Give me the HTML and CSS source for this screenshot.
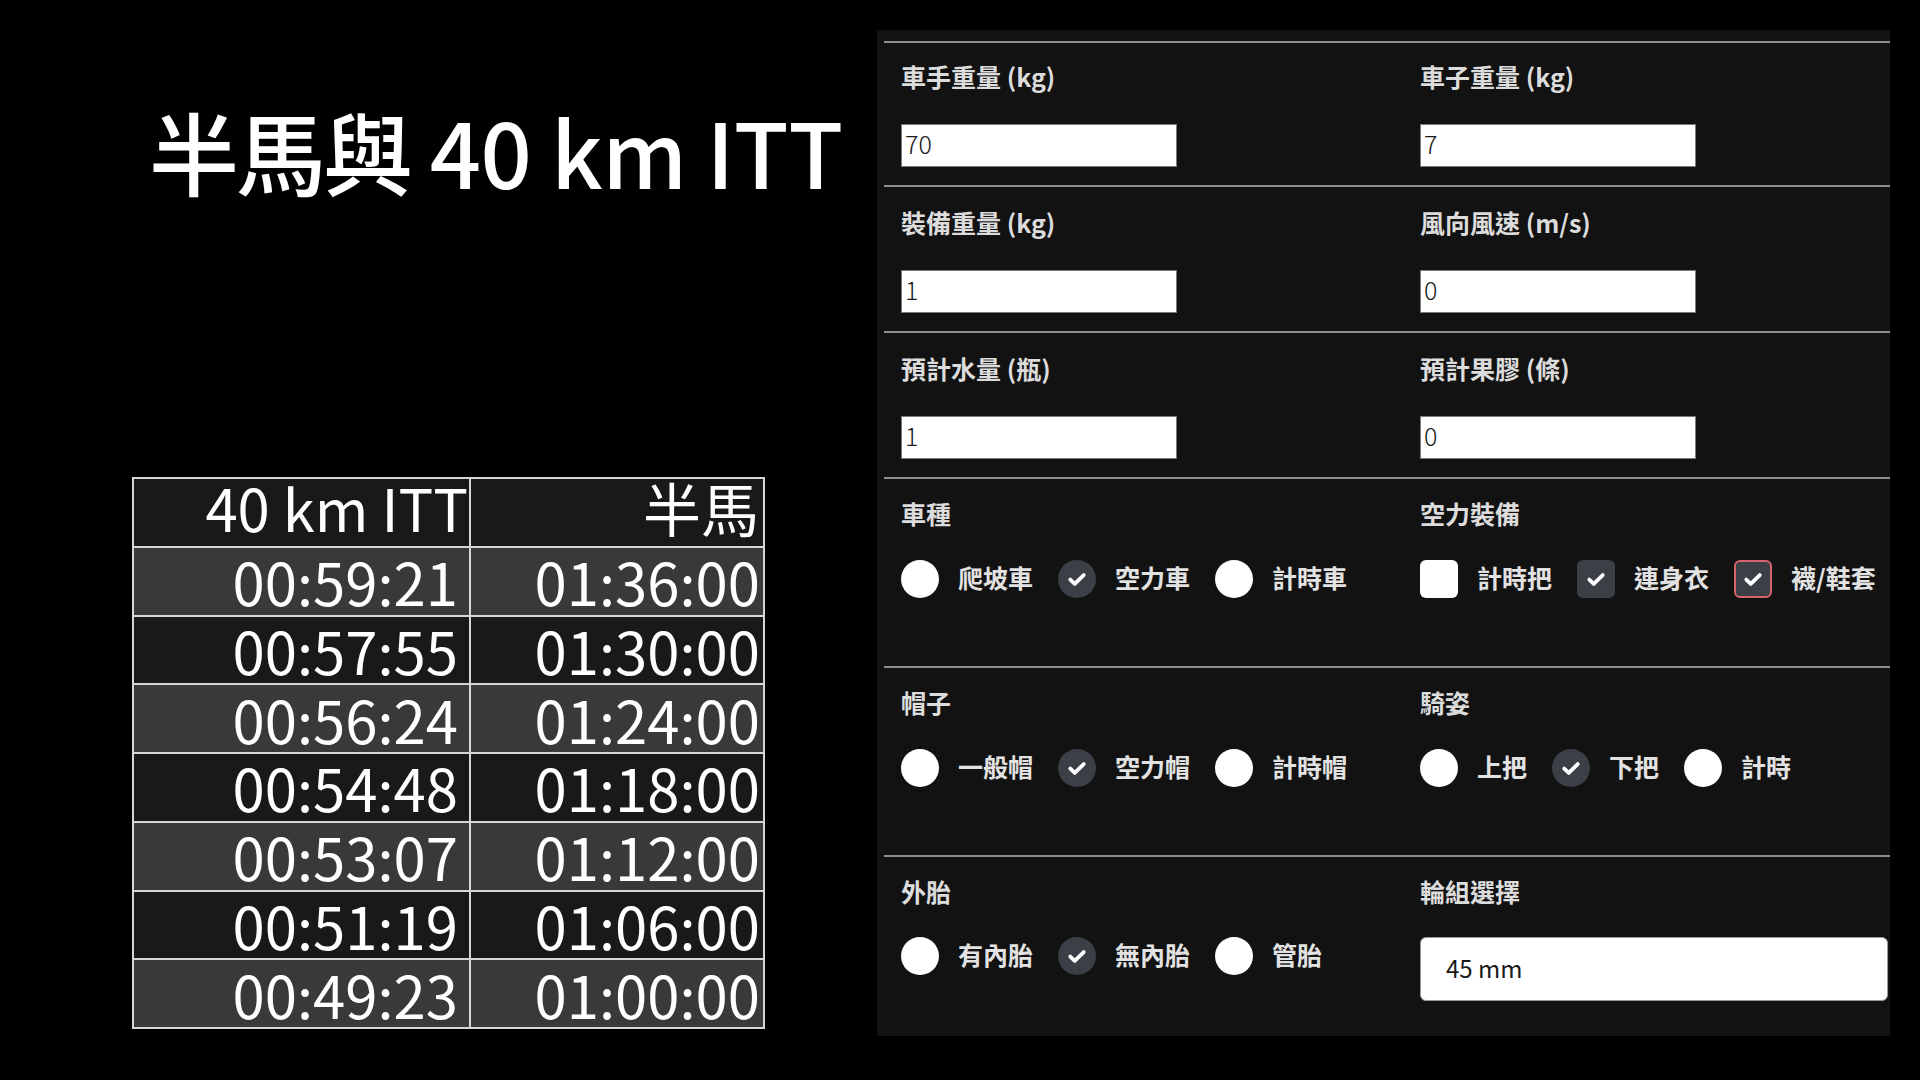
FILE: index.html
```html
<!DOCTYPE html>
<html lang="zh-Hant">
<head>
<meta charset="utf-8">
<title>半馬與 40 km ITT</title>
<link rel="stylesheet" href="styles.css">
</head>
<body>
<div class="page">
  <div class="left">
    <h1 class="title"><span class="title-cjk">半馬與</span> 40 km ITT</h1>
    <table class="times">
      <tr class="head"><th class="c1">40 km ITT</th><th class="c2">半馬</th></tr>
      <tr class="alt"><td class="c1">00:59:21</td><td class="c2">01:36:00</td></tr>
      <tr><td class="c1">00:57:55</td><td class="c2">01:30:00</td></tr>
      <tr class="alt"><td class="c1">00:56:24</td><td class="c2">01:24:00</td></tr>
      <tr><td class="c1">00:54:48</td><td class="c2">01:18:00</td></tr>
      <tr class="alt"><td class="c1">00:53:07</td><td class="c2">01:12:00</td></tr>
      <tr><td class="c1">00:51:19</td><td class="c2">01:06:00</td></tr>
      <tr class="alt"><td class="c1">00:49:23</td><td class="c2">01:00:00</td></tr>
    </table>
  </div>

  <div class="panel">
    <section class="sec sec-input sec-first">
      <div class="field"><div class="lbl">車手重量 (kg)</div><input class="num" type="text" value="70"></div>
      <div class="field"><div class="lbl">車子重量 (kg)</div><input class="num" type="text" value="7"></div>
    </section>
    <section class="sec sec-input">
      <div class="field"><div class="lbl">裝備重量 (kg)</div><input class="num" type="text" value="1"></div>
      <div class="field"><div class="lbl">風向風速 (m/s)</div><input class="num" type="text" value="0"></div>
    </section>
    <section class="sec sec-input">
      <div class="field"><div class="lbl">預計水量 (瓶)</div><input class="num" type="text" value="1"></div>
      <div class="field"><div class="lbl">預計果膠 (條)</div><input class="num" type="text" value="0"></div>
    </section>

    <section class="sec sec-choice">
      <div class="field">
        <div class="lbl">車種</div>
        <div class="opts">
          <span class="opt"><span class="mark radio"></span><span class="otext">爬坡車</span></span>
          <span class="opt"><span class="mark radio on"><svg viewBox="0 0 20 20"><path d="M5.2 10.4l3.2 3.1L14.8 7.2"/></svg></span><span class="otext">空力車</span></span>
          <span class="opt"><span class="mark radio"></span><span class="otext">計時車</span></span>
        </div>
      </div>
      <div class="field">
        <div class="lbl">空力裝備</div>
        <div class="opts">
          <span class="opt"><span class="mark box"></span><span class="otext">計時把</span></span>
          <span class="opt"><span class="mark box on"><svg viewBox="0 0 20 20"><path d="M5.2 10.4l3.2 3.1L14.8 7.2"/></svg></span><span class="otext">連身衣</span></span>
          <span class="opt"><span class="mark box on focus"><svg viewBox="0 0 20 20"><path d="M5.2 10.4l3.2 3.1L14.8 7.2"/></svg></span><span class="otext">襪/鞋套</span></span>
        </div>
      </div>
    </section>

    <section class="sec sec-choice">
      <div class="field">
        <div class="lbl">帽子</div>
        <div class="opts">
          <span class="opt"><span class="mark radio"></span><span class="otext">一般帽</span></span>
          <span class="opt"><span class="mark radio on"><svg viewBox="0 0 20 20"><path d="M5.2 10.4l3.2 3.1L14.8 7.2"/></svg></span><span class="otext">空力帽</span></span>
          <span class="opt"><span class="mark radio"></span><span class="otext">計時帽</span></span>
        </div>
      </div>
      <div class="field">
        <div class="lbl">騎姿</div>
        <div class="opts">
          <span class="opt"><span class="mark radio"></span><span class="otext">上把</span></span>
          <span class="opt"><span class="mark radio on"><svg viewBox="0 0 20 20"><path d="M5.2 10.4l3.2 3.1L14.8 7.2"/></svg></span><span class="otext">下把</span></span>
          <span class="opt"><span class="mark radio"></span><span class="otext">計時</span></span>
        </div>
      </div>
    </section>

    <section class="sec sec-choice sec-last">
      <div class="field">
        <div class="lbl">外胎</div>
        <div class="opts">
          <span class="opt"><span class="mark radio"></span><span class="otext">有內胎</span></span>
          <span class="opt"><span class="mark radio on"><svg viewBox="0 0 20 20"><path d="M5.2 10.4l3.2 3.1L14.8 7.2"/></svg></span><span class="otext">無內胎</span></span>
          <span class="opt"><span class="mark radio"></span><span class="otext">管胎</span></span>
        </div>
      </div>
      <div class="field">
        <div class="lbl">輪組選擇</div>
        <div class="select">45 mm</div>
      </div>
    </section>
  </div>
</div>
</body>
</html>
```
FILE: styles.css
```css
* { box-sizing: border-box; }
html, body { margin: 0; padding: 0; }
body {
  background: #000;
  width: 1920px;
  height: 1080px;
  overflow: hidden;
  font-family: "Noto Sans CJK TC", "Microsoft JhengHei", sans-serif;
  color: #fff;
}
.page {
  display: flex;
  width: 1920px;
  height: 1080px;
}
.left {
  width: 877px;
  flex: none;
  display: flex;
  flex-direction: column;
}
.title {
  margin: 95px 0 0 149px;
  font-size: 90px;
  line-height: 110px;
  font-weight: 500;
  color: #fff;
  white-space: nowrap;
  letter-spacing: -0.5px;
}
.title-cjk { letter-spacing: -3px; }
.times {
  margin: 272px 0 0 132px;
  border-collapse: collapse;
  width: 633px;
  border: 2px solid #d6d6d6;
}
.times tr { height: 68.75px; }
.times th, .times td {
  border: 2px solid #d6d6d6;
  padding: 0;
  font-size: 58px;
  line-height: 56px;
  font-weight: 400;
  text-align: right;
  vertical-align: middle;
  background: #1a1818;
  color: #fff;
  white-space: nowrap;
}
.times th {
  line-height: 48px;
  padding-bottom: 10px;
}
.times .c1 { width: 337px; padding-right: 11px; }
.times .c2 { padding-right: 3px; }
.times th.c1 { padding-right: 1px; }
.times th.c2 { padding-right: 4px; }
.times tr.alt td { background: #3b3838; }

.panel {
  margin-top: 30px;
  width: 1013px;
  height: 1006px;
  flex: none;
  background: #121212;
  padding: 11px 0 0 7px;
  display: flex;
  flex-direction: column;
}
.sec {
  border-top: 2px solid #8e8e8e;
  display: grid;
  grid-template-columns: 519px 1fr;
  padding-left: 17px;
}
.sec-input { padding-top: 20px; padding-bottom: 18px; }
.sec-first { padding-top: 18px; }
.sec-choice { padding-top: 19px; height: 189px; }
.sec-last { flex: 1; height: auto; }
.field { display: flex; flex-direction: column; align-items: flex-start; }
.lbl {
  font-size: 25px;
  line-height: 30px;
  font-weight: 700;
  color: #dcdcdc;
  white-space: nowrap;
}
.sec-input .lbl { margin-bottom: 33px; }
.sec-first .lbl { margin-bottom: 33px; }
.sec-choice .lbl { margin-bottom: 32px; }
.sec-last .lbl { margin-bottom: 31px; }

.num {
  width: 276px;
  height: 43px;
  border: 1px solid #7a7a7a;
  background: #fff;
  padding: 0 0 5px 3px;
  margin: 0;
  font-family: "Noto Sans CJK TC", sans-serif;
  font-size: 25px;
  font-weight: 300;
  color: #1a1a1a;
  outline: none;
}

.opts { display: flex; align-items: center; gap: 25px; height: 38px; }
.opt { display: flex; align-items: center; gap: 19px; }
.mark {
  width: 38px;
  height: 38px;
  flex: none;
  background: #fff;
  display: flex;
  align-items: center;
  justify-content: center;
}
.radio { border-radius: 50%; }
.box { border-radius: 6px; }
.mark.on { background: #3b3f46; }
.mark.focus { border: 2px solid #d8646b; }
.mark svg { width: 28px; height: 28px; }
.mark svg path {
  fill: none;
  stroke: #fff;
  stroke-width: 2.7;
  stroke-linecap: round;
  stroke-linejoin: round;
}
.otext {
  font-size: 25px;
  line-height: 30px;
  font-weight: 700;
  color: #e2e2e2;
  white-space: nowrap;
  position: relative;
  top: -2px;
}
.select {
  width: 468px;
  height: 64px;
  background: #fff;
  border: 1px solid #9a9a9a;
  border-radius: 6px;
  padding: 0 0 4px 25px;
  display: flex;
  align-items: center;
  font-size: 24px;
  color: #1a1a1a;
}
```
